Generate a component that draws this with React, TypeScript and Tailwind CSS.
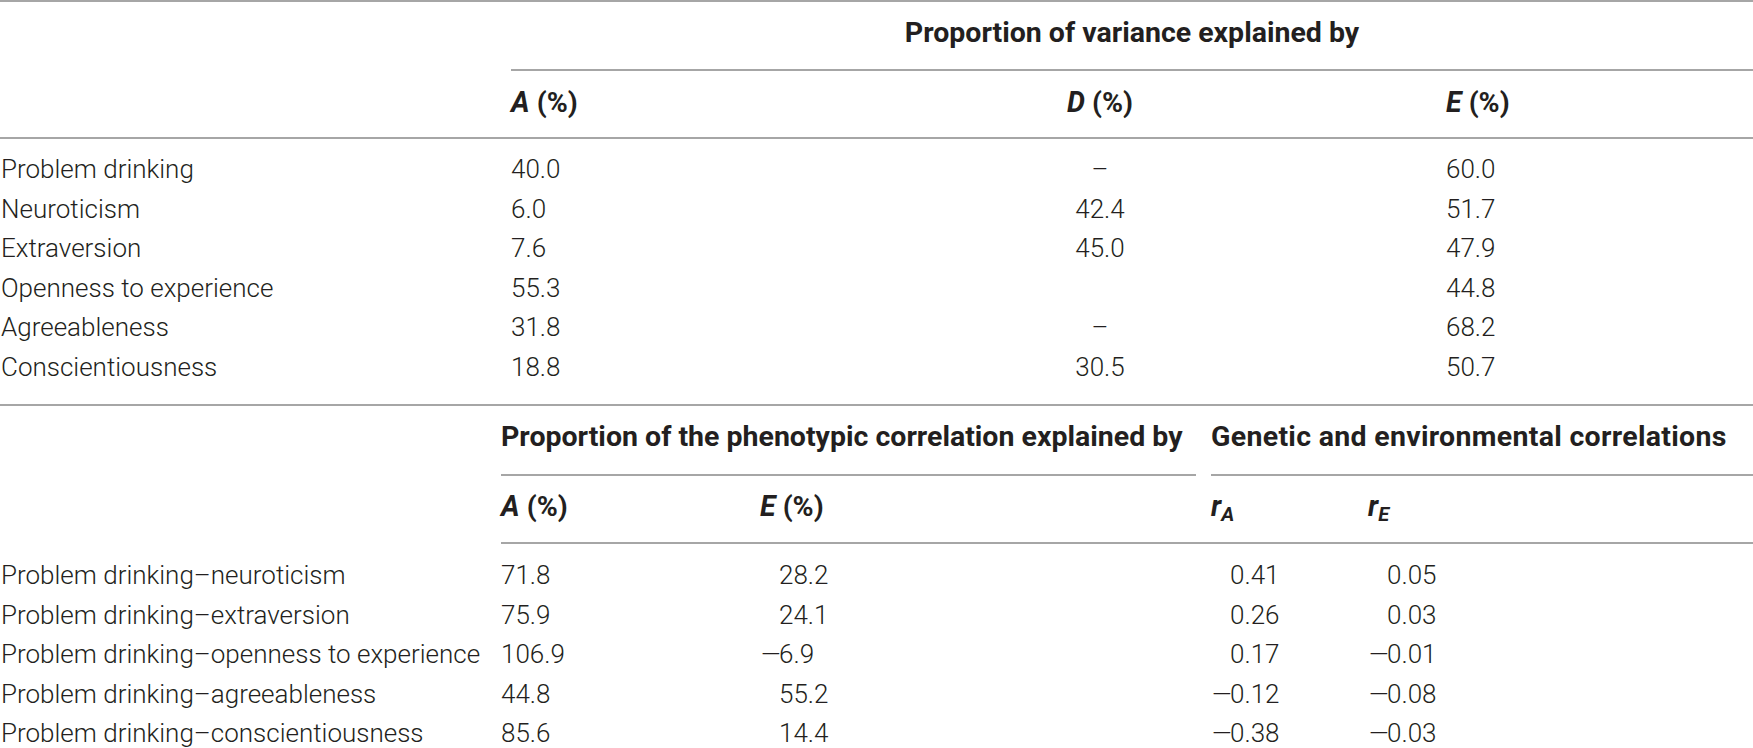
const topRows = [
  ["Problem drinking", "40.0", "–", "60.0"],
  ["Neuroticism", "6.0", "42.4", "51.7"],
  ["Extraversion", "7.6", "45.0", "47.9"],
  ["Openness to experience", "55.3", "", "44.8"],
  ["Agreeableness", "31.8", "–", "68.2"],
  ["Conscientiousness", "18.8", "30.5", "50.7"],
];

const bottomRows = [
  ["Problem drinking–neuroticism", "71.8", "28.2", "0.41", "0.05"],
  ["Problem drinking–extraversion", "75.9", "24.1", "0.26", "0.03"],
  ["Problem drinking–openness to experience", "106.9", "−6.9", "0.17", "−0.01"],
  ["Problem drinking–agreeableness", "44.8", "55.2", "−0.12", "−0.08"],
  ["Problem drinking–conscientiousness", "85.6", "14.4", "−0.38", "−0.03"],
];

// signed numbers keep a fixed slot for the minus so digits line up
const Num = ({ value }: { value: string }) => {
  const neg = value.startsWith("−");
  return (
    <span>
      <span className="inline-block w-[19px]">
        {neg && <span className="inline-block scale-x-[1.3] origin-left">–</span>}
      </span>
      {neg ? value.slice(1) : value}
    </span>
  );
};

const head = "font-['Roboto','Liberation_Sans',sans-serif] font-bold text-[28.5px] leading-[32px]";

const App = () => {
  return (
    <div className="w-[1753px] min-h-[748px] bg-white text-[#231f20] font-['Roboto','Liberation_Sans',sans-serif] font-light text-[26px]">
      {/* Proportion of variance */}
      <div className="grid grid-cols-[511px_469px_240px_1fr] border-t-2 border-b-2 border-[#a6a6a6]">
        <div className={`col-start-2 col-span-3 h-[69px] flex items-center justify-center pb-[5px] border-b-2 border-[#a6a6a6] whitespace-nowrap ${head}`}>
          Proportion of variance explained by
        </div>
        <div className={`col-start-2 h-[66px] flex items-center pb-[2px] ${head}`}>
          <i>A</i>&nbsp;(%)
        </div>
        <div className={`h-[66px] flex items-center justify-center pb-[2px] ${head}`}>
          <i>D</i>&nbsp;(%)
        </div>
        <div className={`h-[66px] flex items-center pl-[226px] pb-[2px] ${head}`}>
          <i>E</i>&nbsp;(%)
        </div>
      </div>

      <div className="grid grid-cols-[511px_469px_240px_1fr] pt-[11px] pb-[17px] border-b-2 border-[#a6a6a6]">
        {topRows.map((row) => (
          <div key={row[0]} className="contents">
            <div className="h-[39.5px] leading-[39.5px] pl-[1px] whitespace-nowrap">{row[0]}</div>
            <div className="h-[39.5px] leading-[39.5px]">{row[1]}</div>
            <div className="h-[39.5px] leading-[39.5px] text-center">{row[2]}</div>
            <div className="h-[39.5px] leading-[39.5px] pl-[226px]">{row[3]}</div>
          </div>
        ))}
      </div>

      {/* Phenotypic correlation */}
      <div className="grid grid-cols-[501px_259px_451px_157px_1fr]">
        <div className={`col-start-2 col-span-2 mr-[15px] h-[70px] flex items-center pb-[6px] border-b-2 border-[#a6a6a6] whitespace-nowrap ${head}`}>
          Proportion of the phenotypic correlation explained by
        </div>
        <div className={`col-span-2 h-[70px] flex items-center pb-[6px] border-b-2 border-[#a6a6a6] whitespace-nowrap tracking-[0.3px] ${head}`}>
          Genetic and environmental correlations
        </div>
        <div className={`col-start-2 h-[68px] flex items-center pb-[5px] border-b-2 border-[#a6a6a6] ${head}`}>
          <i>A</i>&nbsp;(%)
        </div>
        <div className={`h-[68px] flex items-center pb-[5px] border-b-2 border-[#a6a6a6] ${head}`}>
          <i>E</i>&nbsp;(%)
        </div>
        <div className={`h-[68px] flex items-center pb-[5px] border-b-2 border-[#a6a6a6] ${head}`}>
          <i>
            r<sub className="text-[20px]">A</sub>
          </i>
        </div>
        <div className={`h-[68px] flex items-center pb-[5px] border-b-2 border-[#a6a6a6] ${head}`}>
          <i>
            r<sub className="text-[20px]">E</sub>
          </i>
        </div>
      </div>

      <div className="grid grid-cols-[501px_259px_451px_157px_1fr] pt-[12px]">
        {bottomRows.map((row) => (
          <div key={row[0]} className="contents">
            <div className="h-[39.5px] leading-[39.5px] pl-[1px] whitespace-nowrap">{row[0]}</div>
            <div className="h-[39.5px] leading-[39.5px]">{row[1]}</div>
            <div className="h-[39.5px] leading-[39.5px]">
              <Num value={row[2]} />
            </div>
            <div className="h-[39.5px] leading-[39.5px]">
              <Num value={row[3]} />
            </div>
            <div className="h-[39.5px] leading-[39.5px]">
              <Num value={row[4]} />
            </div>
          </div>
        ))}
      </div>
    </div>
  );
};

export default App;
